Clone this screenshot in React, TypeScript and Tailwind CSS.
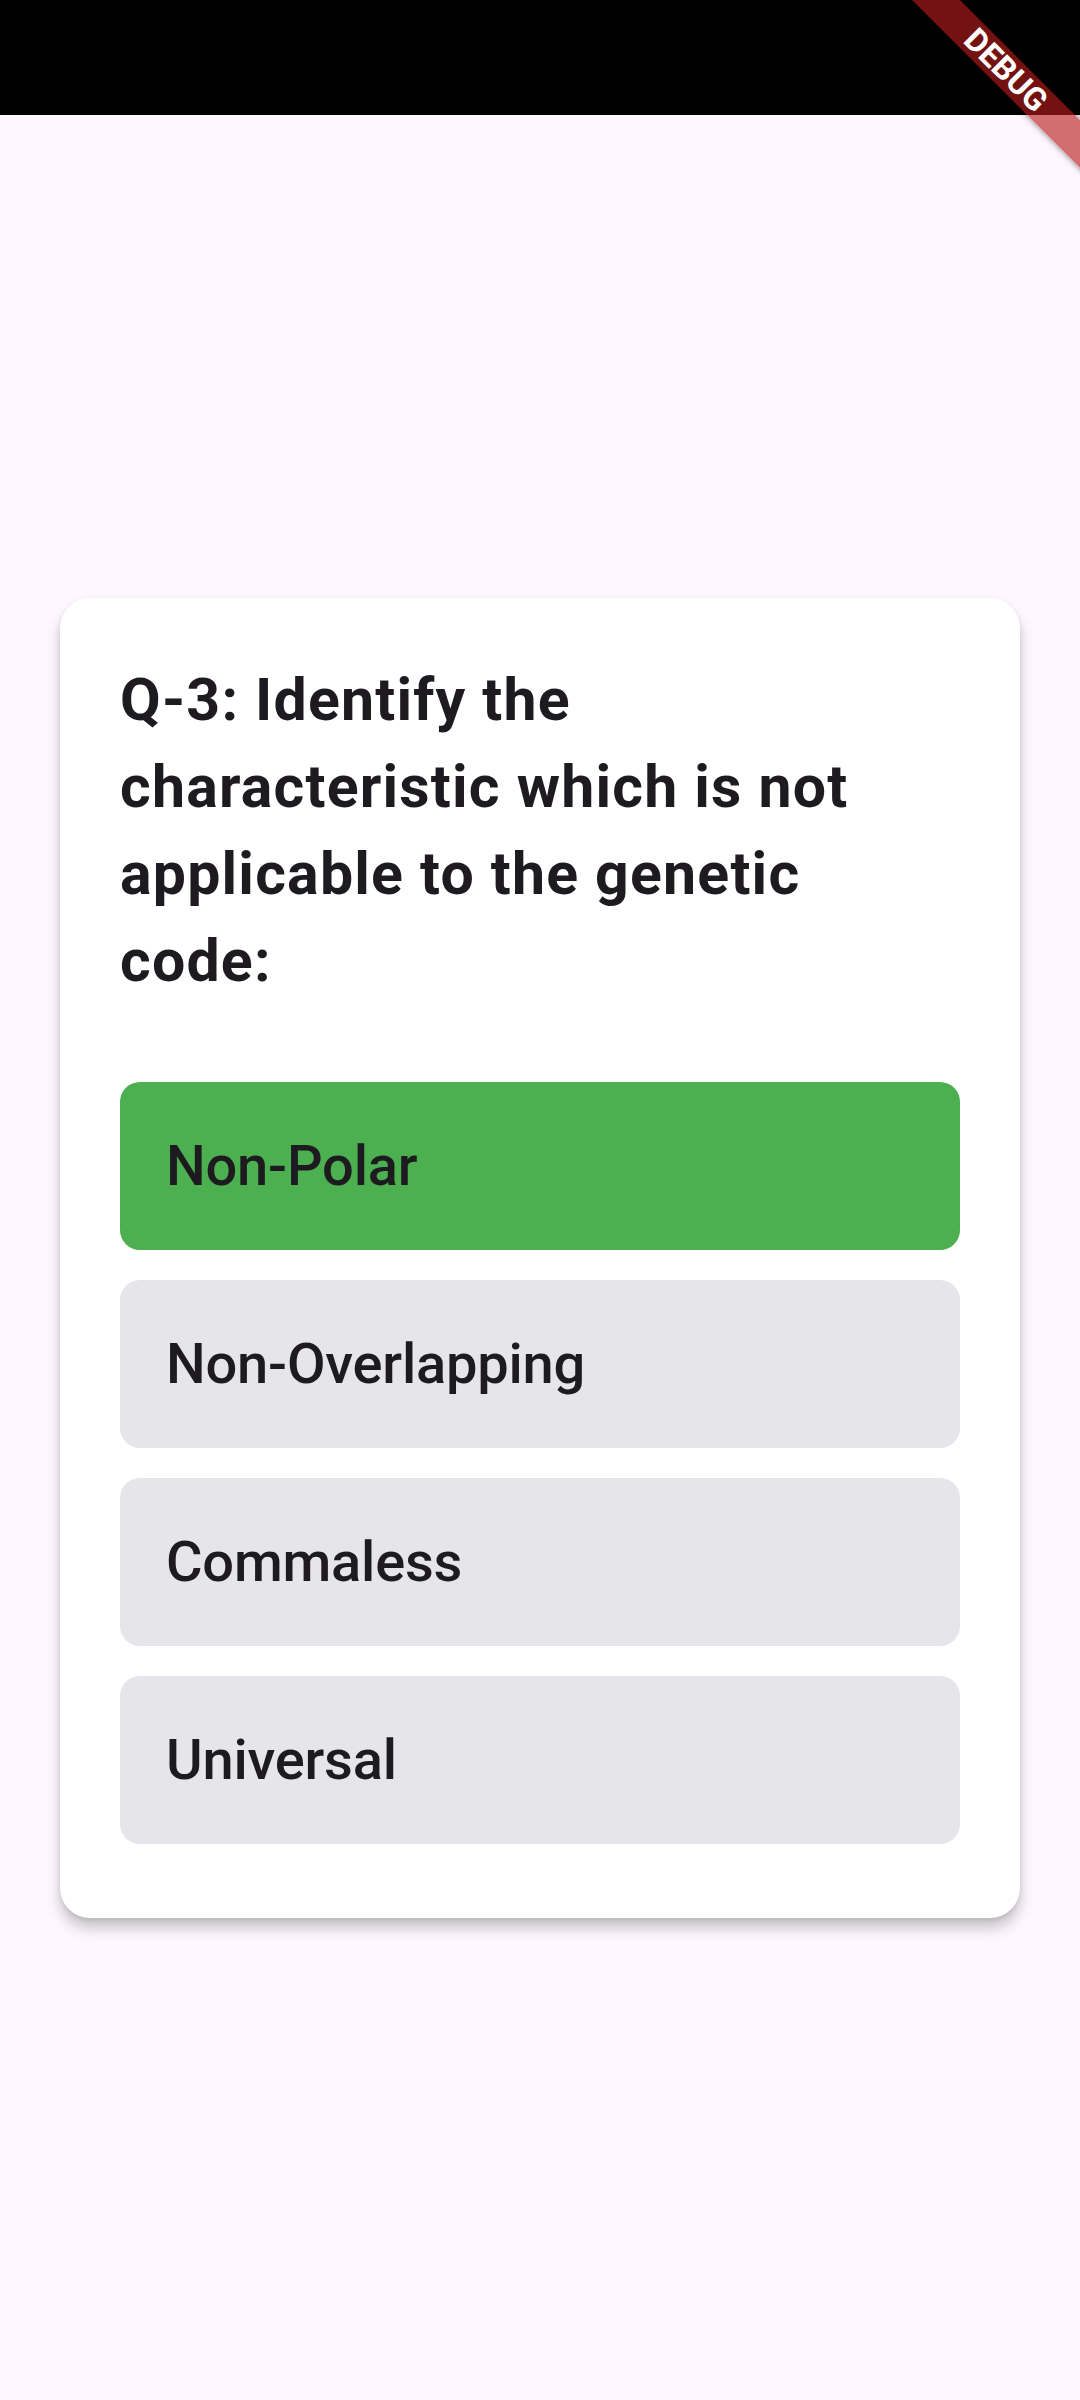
import React from 'react';

const options = ['Non-Polar', 'Non-Overlapping', 'Commaless', 'Universal'];

const App: React.FC = () => {
  const selected = 0;

  return (
    <div className="relative flex h-[2400px] w-[1080px] flex-col overflow-hidden bg-[#fef7ff] font-['Roboto',sans-serif] text-[#1d1b20]">
      {/* status bar */}
      <div className="h-[115px] w-full bg-black" />

      {/* quiz card */}
      <div className="flex flex-1 items-center justify-center px-[60px]">
        <div className="w-full rounded-[30px] bg-white px-[60px] pb-[74px] pt-[58px] shadow-[0_10px_14px_rgba(0,0,0,0.22),0_2px_4px_rgba(0,0,0,0.08)]">
          <h1 className="text-[59px] font-bold leading-[87px] tracking-[1.2px]">
            Q-3: Identify the characteristic which is not applicable to the genetic code:
          </h1>

          <div className="mt-[78px] flex flex-col gap-[30px]">
            {options.map((opt, i) => (
              <div
                key={opt}
                className={`flex h-[168px] items-center rounded-[20px] px-[46px] text-[56px] font-medium tracking-[-0.2px] ${
                  i === selected ? 'bg-[#4caf50]' : 'bg-[#e6e5ea]'
                }`}
              >
                {opt}
              </div>
            ))}
          </div>
        </div>
      </div>

      {/* debug banner */}
      <div className="pointer-events-none absolute right-0 top-0 h-[200px] w-[200px] overflow-hidden">
        <div className="absolute left-[-4px] top-[53px] flex h-[34px] w-[260px] rotate-45 items-center justify-center bg-[rgba(183,28,28,0.63)] shadow-[0_0_6px_rgba(0,0,0,0.5)]">
          <span className="text-[32px] font-bold leading-none text-white">DEBUG</span>
        </div>
      </div>
    </div>
  );
};

export default App;
